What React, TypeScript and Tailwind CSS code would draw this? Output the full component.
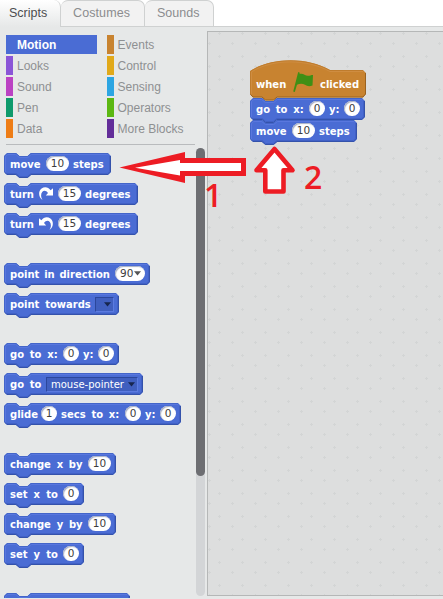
import React from 'react';

type Part =
  | { kind: 'text'; text: string; cls: string }
  | { kind: 'num'; text: string; cls: string }
  | { kind: 'menuNum'; text: string }
  | { kind: 'menu'; text: string; cls: string }
  | { kind: 'cw' }
  | { kind: 'ccw' };

const t = (text: string, cls: string): Part => ({ kind: 'text', text, cls });
const n = (text: string): Part => ({ kind: 'num', text, cls: text.length > 1 ? 'w-[23px]' : 'w-4' });

interface BlockData {
  width: number;
  parts: Part[];
  gap?: string;
}

const goToXY: Part[] = [t('go to x:', 'w-[53px] [word-spacing:2.3px]'), n('0'), t('y:', 'ml-1 w-[15px]'), n('0')];
const moveSteps: Part[] = [t('move', 'w-9'), n('10'), t('steps', 'ml-1')];

const blocks: BlockData[] = [
  { width: 107, parts: moveSteps },
  { width: 134, parts: [t('turn', 'w-[29px]'), { kind: 'cw' }, n('15'), t('degrees', 'ml-1')] },
  { width: 134, parts: [t('turn', 'w-[29px]'), { kind: 'ccw' }, n('15'), t('degrees', 'ml-1')] },
  { width: 146, gap: 'mt-5', parts: [t('point in direction', 'w-[105px] [word-spacing:1.3px]'), { kind: 'menuNum', text: '90' }] },
  { width: 115, parts: [t('point towards', 'w-[85px] [word-spacing:2.3px]'), { kind: 'menu', text: '', cls: 'w-[19px]' }] },
  { width: 115, gap: 'mt-5', parts: goToXY },
  { width: 139, parts: [t('go to', 'w-9 [word-spacing:2.3px]'), { kind: 'menu', text: 'mouse-pointer', cls: 'w-[92px]' }] },
  {
    width: 177,
    parts: [t('glide', 'w-[31px]'), n('1'), t('secs to x:', 'ml-1 w-[64px] [word-spacing:2.3px]'), n('0'), t('y:', 'ml-1 w-[15px]'), n('0')],
  },
  { width: 112, gap: 'mt-5', parts: [t('change x by', 'w-[78px] [word-spacing:2.3px]'), n('10')] },
  { width: 80, parts: [t('set x to', 'w-[53px] [word-spacing:2.6px]'), n('0')] },
  { width: 112, parts: [t('change y by', 'w-[78px] [word-spacing:2.3px]'), n('10')] },
  { width: 80, parts: [t('set y to', 'w-[53px] [word-spacing:2.6px]'), n('0')] },
  { width: 126, gap: 'mt-5', parts: [] },
];

function BlockShape({ w }: { w: number }) {
  return (
    <svg className="absolute left-0 top-0" width={w} height="26" fill="none">
      <path
        d={`M0 3L3 0H12L15.5 3H23.5L27 0H${w - 3}L${w} 3V19L${w - 3} 22H27L23.5 25H15.5L12 22H3L0 19Z`}
        fill="#4a6cd4"
      />
      <path d={`M.5 19V3.2L3.2 .5H12L15.5 3.5H23.5L27 .5H${w - 3}`} stroke="#4365c9" />
      <path d={`M1.5 19V3.7L3.7 1.5H11.8L15.3 4.5H23.8L27.3 1.5H${w - 3}`} stroke="#5c7be0" strokeOpacity=".8" />
      <path
        d={`M${w - 0.5} 3V18.8L${w - 3.2} 21.5H27L23.5 24.5H15.5L12 21.5H3L1 19.5`}
        stroke="#3452ab"
      />
      <path d={`M${w - 1.5} 3V18.3L${w - 3.7} 20.5H26.7L23.2 23.5H15.8L12.3 20.5H3`} stroke="#3d5cc0" strokeOpacity=".7" />
    </svg>
  );
}

function TurnIcon({ ccw }: { ccw?: boolean }) {
  return (
    <svg className={ccw ? 'mr-[5px] h-[15px] w-[14px] shrink-0 -scale-x-100' : 'mr-[5px] h-[15px] w-[14px] shrink-0'} viewBox="0 0 14 15">
      <path
        d="M3.6 14C-.6 11.3 -1 5.2 2.6 2.6C5.6 .4 9.4 1.2 11.6 4.2L14 2.2V9.4H6.8L9 7C7.2 4.4 4.7 4.2 3.2 6C1.6 8 1.8 11.4 3.6 14Z"
        fill="#fff"
      />
    </svg>
  );
}

const Triangle = ({ cls }: { cls: string }) => (
  <svg className={cls} width="7" height="5" viewBox="0 0 7 5">
    <path d="M0 .2H7L3.5 4.6Z" fill="currentColor" />
  </svg>
);

const oval =
  "flex h-[15px] shrink-0 items-center rounded-full bg-white font-['DejaVu_Sans'] text-[10.5px] font-normal text-[#3d3d3d] shadow-[inset_1px_1px_1px_#a5adc4]";

function PartView({ part }: { part: Part }) {
  switch (part.kind) {
    case 'text':
      return <span className={`shrink-0 whitespace-pre pt-[2px] ${part.cls}`}>{part.text}</span>;
    case 'num':
      return (
        <span className={`${oval} justify-center ${part.cls}`}>
          <span className="pb-px">{part.text}</span>
        </span>
      );
    case 'menuNum':
      return (
        <span className={`${oval} w-[30px] pl-[5px]`}>
          <span className="pb-px">{part.text}</span>
          <Triangle cls="-mt-px ml-px shrink-0 text-[#555]" />
        </span>
      );
    case 'menu':
      return (
        <span
          className={`mt-[2px] flex h-[15px] shrink-0 items-center justify-between border border-b-[#5c7be0] border-l-[#2c479c] border-r-[#5c7be0] border-t-[#2c479c] bg-[#405fbf] pl-1 pr-[2px] text-[10px] font-normal ${part.cls}`}
        >
          <span>{part.text}</span>
          <Triangle cls="text-[#17264f]" />
        </span>
      );
    case 'cw':
      return <TurnIcon />;
    case 'ccw':
      return <TurnIcon ccw />;
  }
}

function Block({ width, parts }: BlockData) {
  return (
    <div className="relative h-[22px]" style={{ width }}>
      <BlockShape w={width} />
      <div className="relative flex h-[21px] items-center pl-[6px] font-['DejaVu_Sans'] text-[10px] font-bold leading-[12px] text-white">
        {parts.map((p, i) => (
          <PartView key={i} part={p} />
        ))}
      </div>
    </div>
  );
}

const categories = [
  ['Looks', 'bg-[#8a55d7]', 'Control', 'bg-[#e1a91a]'],
  ['Sound', 'bg-[#bb42c3]', 'Sensing', 'bg-[#2ca5e2]'],
  ['Pen', 'bg-[#0e9a6c]', 'Operators', 'bg-[#5cb712]'],
  ['Data', 'bg-[#ee7d16]', 'More Blocks', 'bg-[#632d99]'],
];

function Category({ name, color }: { name: string; color: string }) {
  return (
    <div className="flex h-[19px] w-[101px] items-center">
      <span className={`h-full w-[7px] ${color}`} />
      <span className="whitespace-nowrap pl-1 pt-px">{name}</span>
    </div>
  );
}

function Tabs() {
  const idle =
    'h-[26px] rounded-t-[7px] border-r-[1.5px] border-t border-[#cfd1d1] bg-[#f2f2f2] text-[#8b8c8e]';
  return (
    <div className="flex h-[26px] bg-white text-[12.5px] leading-[18px]">
      <div className="z-10 h-[27px] w-[61px] rounded-tr-[7px] border-r border-[#cfd1d1] bg-gradient-to-b from-white to-[#e6e8e8] pl-[9px] pt-[4px] text-[#4c4d4f]">
        Scripts
      </div>
      <div className={`${idle} w-[84px] pl-[12px] pt-[3px] tracking-[0.1px]`}>Costumes</div>
      <div className={`${idle} w-[69px] pl-[12px] pt-[3px]`}>Sounds</div>
    </div>
  );
}

function HatBlock() {
  return (
    <div className="relative h-[38px] w-[116px]">
      <svg className="absolute left-0 top-0 z-10" width="116" height="42" fill="none">
        <path
          d="M0 11C22-3 57-3 80 10H113L116 13V34L113 37.5H27L23.5 40.5H15.5L12 37.5H3L0 34.5Z"
          fill="#c88330"
        />
        <path d="M.5 34V11.3C22-2.4 57-2.4 80 10.5H113" stroke="#bf7c2d" />
        <path d="M1.5 34V11.9C22-1.4 57-1.4 80 11.5H113" stroke="#d29249" strokeOpacity=".7" />
        <path d="M115.5 13V34L113 37H27L23.5 40H15.5L12 37H3L.5 34.5" stroke="#9a6220" />
      </svg>
      <div className="relative z-20 flex h-full items-center pl-[6px] pt-[11px] font-['DejaVu_Sans'] text-[10px] font-bold leading-[12px] text-white">
        <span className="w-[37px] pt-px">when</span>
        <svg className="-mt-[6px] shrink-0" width="20" height="20" viewBox="0 0 20 20">
          <path
            d="M5.2 0L6.8 .8L6.6 2C10 .6 12 4 15 3.8C17 3.8 18 3 20 3L19.5 13.5C16 15 14 14 12 12.8C9.5 11.4 6.5 11.5 4 12.8L1.8 20L.2 19.4Z"
            fill="#3f8f15"
          />
        </svg>
        <span className="ml-[7px] pt-px">clicked</span>
      </div>
    </div>
  );
}

function Annotations() {
  return (
    <div className="pointer-events-none absolute inset-0 z-30 font-['Open_Sans'] text-[32px] font-semibold leading-[32px] text-[#ed1c24]">
      <svg className="absolute inset-0" width="443" height="599">
        <path d="M119.5 167.5L185 152V158H246V176H185V183Z" fill="#ed1c24" />
        <path d="M135 167.7L180 160V163H241V171H180V175.5Z" fill="#fff" />
        <path
          d="M274.5 149L292.5 170.3H283.5V191.5H265.3V170.3H256.5Z"
          fill="#fff"
          stroke="#ed1c24"
          strokeWidth="4.6"
          strokeLinejoin="round"
        />
      </svg>
      <span className="absolute left-[204px] top-[179px]">1</span>
      <span className="absolute left-[304px] top-[161px]">2</span>
    </div>
  );
}

export default function App() {
  return (
    <div className="relative flex h-[599px] w-[443px] flex-col overflow-hidden bg-[#e6e8e8] font-['Liberation_Sans',sans-serif]">
      <Tabs />
      <div className="flex h-[572px] border-t border-[#cfd1d1]">
        <div className="flex w-[207px] flex-col">
          <div className="flex flex-col gap-[2px] pl-[6px] pt-2 text-[12px] leading-[18px] text-[#8e9092]">
            <div className="flex">
              <div className="mr-[10px] h-[19px] w-[91px] bg-[#4a6cd4] pl-[11px] pt-px font-bold text-white">Motion</div>
              <Category name="Events" color="bg-[#c88330]" />
            </div>
            {categories.map(([a, ac, b, bc]) => (
              <div className="flex" key={a}>
                <Category name={a} color={ac} />
                <Category name={b} color={bc} />
              </div>
            ))}
          </div>
          <div className="ml-[6px] mt-[6px] h-px w-[189px] shrink-0 bg-[#b9bbbd]" />
          <div className="flex min-h-0 grow">
            <div className="flex h-[453px] w-[192px] flex-col gap-2 overflow-hidden pl-1 pt-2">
              {blocks.map((b, i) => (
                <div key={i} className={`shrink-0 ${b.gap ?? ''}`}>
                  <Block {...b} />
                </div>
              ))}
            </div>
            <div className="ml-1 mt-[3px] h-[448px] w-[9px] rounded-full bg-[#d3d5d7]">
              <div className="h-[328px] rounded-full bg-[#6d6e72]" />
            </div>
          </div>
        </div>
        <div className="mt-1 h-[565px] w-[236px] border-b border-l border-t border-[#b5b7b7] bg-[#dddede]">
          <svg className="absolute" width="235" height="563">
            <defs>
              <pattern id="grid" width="23" height="23" patternUnits="userSpaceOnUse">
                <path d="M10 1.5H13M11.5 0V3M0 11.5H3M1.5 10V13" stroke="#d3d5d5" />
              </pattern>
            </defs>
            <rect width="235" height="563" fill="url(#grid)" />
          </svg>
          <div className="relative flex flex-col pl-[42px] pt-[28px]">
            <HatBlock />
            <Block width={115} parts={goToXY} />
            <Block width={107} parts={moveSteps} />
          </div>
        </div>
      </div>
      <Annotations />
    </div>
  );
}
